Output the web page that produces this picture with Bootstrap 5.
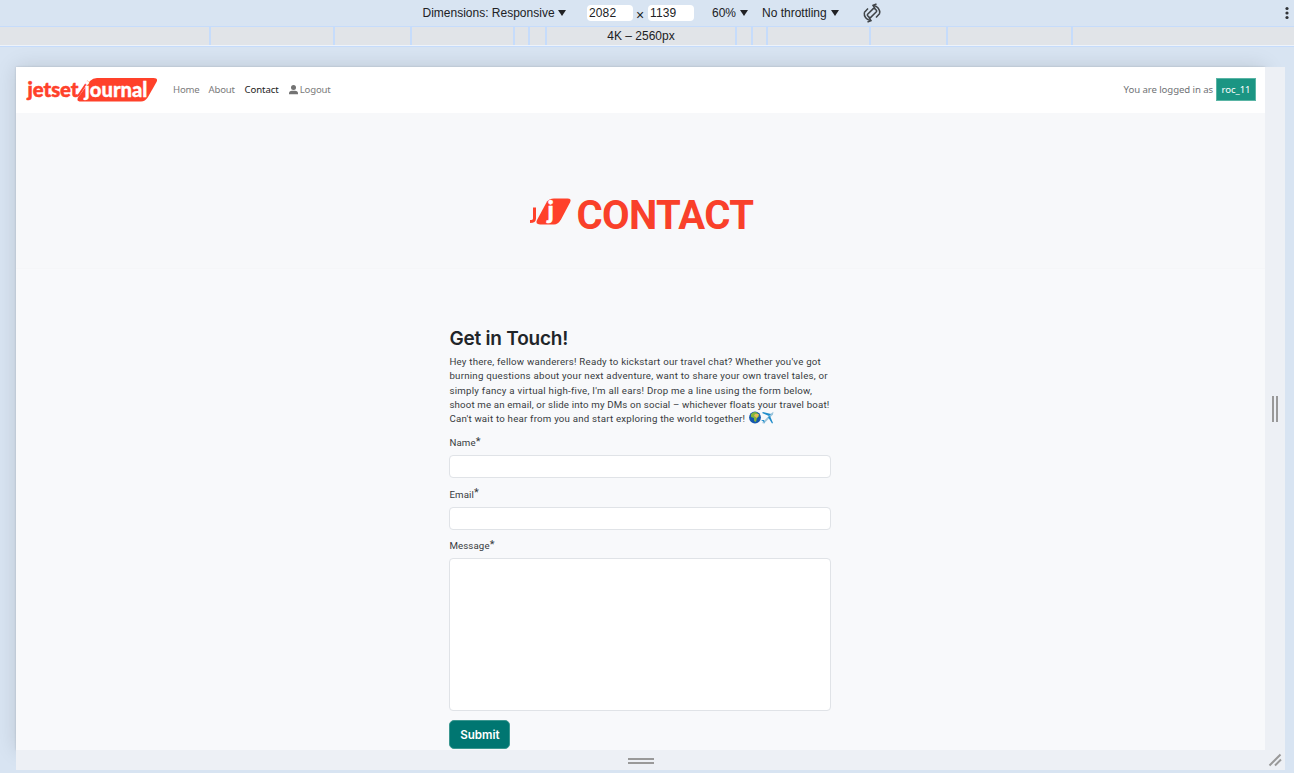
<!DOCTYPE html>
<html lang="en">
<head>
<meta charset="utf-8">
<meta name="viewport" content="width=device-width, initial-scale=1">
<title>Jetset Journal - Contact</title>
<link href="https://cdn.jsdelivr.net/npm/bootstrap@5.3.0/dist/css/bootstrap.min.css" rel="stylesheet">
<style>
body{height:773px;overflow:hidden;background:#d8e4f2;font-family:"Liberation Sans",sans-serif;color:#202124}
.toolbar{height:26px;font-size:12px;line-height:26px;padding-left:422.5px;white-space:nowrap}
.dim-label{width:164.5px}
.dim-input{width:46px;height:16px;line-height:16px;background:#fff;border-radius:4px;padding-left:2px;margin-bottom:1px;letter-spacing:.12px}
.times{width:15px;padding:3px 0 0 3px;font-size:14px}
.zoom{width:50px;margin-left:18px}
.throttle{width:100px}
.caret{display:inline-block;border:4px solid transparent;border-top:6px solid #202124;border-bottom:0;margin-left:4px;vertical-align:1.5px}
.dim-label .caret{margin-left:3px}
.ruler{height:21px;border:solid #c6dcfb;border-width:1px 0;background:#e1e4e8;box-shadow:inset 0 -1px #eef3fa;font-size:12px;line-height:18px;grid-template-columns:211px 124px 77px 103px 15px 17px 190px 16px 15px 103px 77px 125px 1fr}
.ruler>div{border-right:2px solid #c6dcfb;height:18px}
.ruler>div:last-child{border:0}
.stage{display:grid;grid-template:683px 20px/1249px 20px;margin:20px 0 0 16px}
.page{background:#f8f9fb;box-shadow:0 0 20px rgba(0,0,0,.13),0 0 2px rgba(0,0,0,.16)}
.grip{background:#edf0f5;position:relative}
.top-nav{height:46px;padding:0 9px 0 10px;background:#fff;font-family:"Noto Sans",sans-serif;font-size:9.6px;letter-spacing:-.08px}
.top-nav .nav-link{padding:0;color:#7b7b7b;white-space:nowrap;letter-spacing:-.2px}
.top-nav .nav-link.active{color:#222;letter-spacing:-.08px}
.nav-set{margin-left:15px}
.n1{width:35.5px}.n2{width:36px}.n3{width:44px}
.logged{color:#6f7275;gap:3px}
.user-tag{background:#1b9583;border:1px solid #5ab5a5;color:#fff;height:23px;line-height:21px;width:40px;margin-top:-1px}
.hero{height:156px;background:#f7f8fa;padding:45px 0 0 513px;border-bottom:1px solid #f5f6f8}
.hero h1{font:700 40px/46px Roboto,sans-serif;color:#f9402a;margin:35px 0 0 4.5px;letter-spacing:-.6px}
.contact-form{width:382px;margin:58px 0 0 433.4px;font-family:Roboto,sans-serif;font-size:9.7px;color:#373b40}
.contact-form h2{font:600 19px/23px Inter,sans-serif;letter-spacing:-.2px;color:#212529;margin:0 0 5px}
.intro{line-height:14.25px;white-space:nowrap;margin-bottom:9px}
.l1{letter-spacing:.22px}.l2{letter-spacing:.24px}.l3{letter-spacing:.25px}.l4{letter-spacing:.16px}.l5{letter-spacing:.215px}
.l5 svg{margin:-3px 0 0 1px}
.contact-form label{display:block;height:14px;line-height:15px;letter-spacing:.12px}
.contact-form sup{font-size:11px;top:-1.5px;left:0;line-height:0;vertical-align:baseline}
.contact-form .form-control{height:23px;border-color:#e0e3e7;border-radius:4px;padding:2px 6px;font-size:10px;margin-top:6px}
.contact-form textarea.form-control{height:153px;resize:none}
.mt-lab{margin-top:8.5px}
.submit{background:#007671;border:1px solid #3b9790;color:#fff;width:61px;height:29px;border-radius:5px;padding:0;font:600 11.6px/28px Inter,sans-serif;margin-top:9px}
</style>
<script src="https://cdn.jsdelivr.net/npm/bootstrap@5.3.0/dist/js/bootstrap.bundle.min.js"></script>
</head>
<body>
<div class="toolbar d-flex align-items-center">
  <div class="dim-label">Dimensions: Responsive<i class="caret"></i></div>
  <div class="dim-input">2082</div><div class="times">×</div><div class="dim-input">1139</div>
  <div class="zoom">60%<i class="caret"></i></div>
  <div class="throttle">No throttling<i class="caret"></i></div>
  <svg width="20" height="20" viewBox="0 0 20 20" fill="none" stroke="#3f4347" stroke-width="1.5"><rect x="7.8" y="5" width="4.400" height="10" rx="1" transform="rotate(45 10 10)"/><path d="M11.500 2.400C15.500 3 18.200 6.500 17.700 10.500M8.500 17.600C4.500 17 1.800 13.500 2.300 9.500M2.300 9.500 6 5.500M17.700 10.500 14 14.500"/><path d="M14.500 1 11 2.300 13 5.500M5.500 19 9 17.700 7 14.500"/></svg>
  <svg class="ms-auto me-1" width="6" height="14" viewBox="0 0 6 14" fill="#303338"><circle cx="3" cy="2.500" r="1.600"/><circle cx="3" cy="7" r="1.600"/><circle cx="3" cy="11.500" r="1.600"/></svg>
</div>
<div class="ruler d-grid text-center">
  <div></div><div></div><div></div><div></div><div></div><div></div><div>4K – 2560px</div><div></div><div></div><div></div><div></div><div></div><div></div>
</div>
<div class="stage">
  <main class="page">
    <nav class="top-nav d-flex align-items-center">
      <svg width="132" height="26" viewBox="0 0 132 26" font-family="Lato" font-weight="900" font-size="20" letter-spacing="0">
        <path d="M64 4Q67 1 71 1H127.500q5 0 3 4L122 20q-3 4.500-7 4.500H55q-5 0-3-4Z" fill="#ff412a"/>
        <path d="M52 19 62 4" stroke="#ff412a" stroke-width="2"/>
        <text x="1.500" y="19.500" textLength="51" lengthAdjust="spacingAndGlyphs" fill="#ff412a" stroke="#ff412a" stroke-width=".5">jetset</text>
        <text x="58.500" y="19.500" textLength="63" lengthAdjust="spacingAndGlyphs" fill="#fff" stroke="#fff" stroke-width=".3">journal</text>
      </svg>
      <div class="d-flex nav-set">
        <a class="nav-link n1">Home</a><a class="nav-link n2">About</a><a class="nav-link n3 active">Contact</a>
        <a class="nav-link n4"><svg width="9" height="10" viewBox="0 0 9 10" fill="#737373"><circle cx="4.500" cy="2.500" r="2.500"/><path d="M0 9.300V8.500Q0 5.800 3 5.800H6Q9 5.800 9 8.500V9.300Z"/></svg> Logout</a>
      </div>
      <div class="ms-auto d-flex align-items-center logged"><span>You are logged in as</span><span class="user-tag text-center">roc_11</span></div>
    </nav>
    <header class="hero d-flex">
      <svg class="mt-4" width="43" height="60" viewBox="0 0 43 60" font-family="Lato" font-weight="900"><path d="M18 19.500Q20.500 16.500 25 16.500H38.500Q43 16.500 41 20.500L32 37.500Q29 42.500 25 42.500H11Q6 42 8 38Z" fill="#ff412a"/><text x="18.500" y="37" font-size="24" fill="#fff" stroke="#fff" stroke-width=".5">j</text><path d="M5.500 25.500v11q0 3-4.500 3" fill="none" stroke="#ff412a" stroke-width="3"/></svg>
      <h1>CONTACT</h1>
    </header>
    <form class="contact-form">
      <h2>Get in Touch!</h2>
      <div class="intro">
        <div class="l1">Hey there, fellow wanderers! Ready to kickstart our travel chat? Whether you've got</div>
        <div class="l2">burning questions about your next adventure, want to share your own travel tales, or</div>
        <div class="l3">simply fancy a virtual high-five, I'm all ears! Drop me a line using the form below,</div>
        <div class="l4">shoot me an email, or slide into my DMs on social – whichever floats your travel boat!</div>
        <div class="l5">Can't wait to hear from you and start exploring the world together! <svg width="25" height="13" viewBox="0 0 25 13"><circle cx="6" cy="6.500" r="5.900" fill="#1558ad"/><path d="M2 3Q5 0 8 1.500L10.500 5 8 7l-1 4-2-1V7L2 6Z" fill="#83b63c"/><path d="M6 3h4L8 7 5 5Z" fill="#e4ba5b"/><path d="M13 12 22 2.500 24.500.8 24 3.500 15 12.500Z" fill="#9bc5dc"/><path d="m20 5-7-3 1-1 8 2m-1 2 3 7-1 .5L19 6m-4 3-3 0 3 2 1 2" fill="#208dcb"/></svg></div>
      </div>
      <label>Name<sup>*</sup></label><input class="form-control">
      <label class="mt-lab">Email<sup>*</sup></label><input class="form-control">
      <label class="mt-lab">Message<sup>*</sup></label><textarea class="form-control"></textarea>
      <button type="button" class="btn submit">Submit</button>
    </form>
  </main>
  <div class="grip d-flex align-items-center justify-content-center"><svg width="8" height="26"><path d="M2 0v26M6 0v26" stroke="#999" stroke-width="2"/></svg></div>
  <div class="grip d-flex align-items-center justify-content-center pt-1"><svg width="26" height="8"><path d="M0 1h26M0 5h26" stroke="#999" stroke-width="2"/></svg></div>
  <div class="grip"><svg class="d-block" width="20" height="20"><path d="M4.500 15.500 15.500 4.500M10 15.500 16 9.500" stroke="#999" stroke-width="2"/></svg></div>
</div>
</body>
</html>
